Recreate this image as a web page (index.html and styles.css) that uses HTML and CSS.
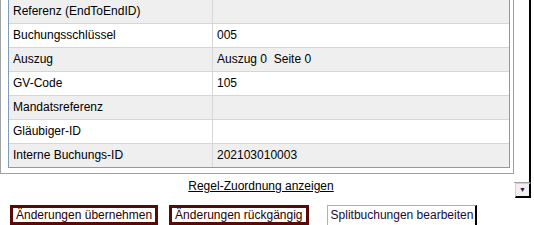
FILE: index.html
```html
<!DOCTYPE html>
<html lang="de">
<head>
  <meta charset="UTF-8" />
  <title>Buchungsdetails</title>
  <link rel="stylesheet" href="styles.css">
</head>
<body>

  <div class="main">
    <div class="left">
      <div class="panel">
        <div class="details">
          <div class="row shade"><div class="label">Referenz (EndToEndID)</div><div class="value"></div></div>
          <div class="row"><div class="label">Buchungsschlüssel</div><div class="value">005</div></div>
          <div class="row shade"><div class="label">Auszug</div><div class="value">Auszug 0&nbsp; Seite 0</div></div>
          <div class="row"><div class="label">GV-Code</div><div class="value">105</div></div>
          <div class="row shade"><div class="label">Mandatsreferenz</div><div class="value"></div></div>
          <div class="row"><div class="label">Gläubiger-ID</div><div class="value"></div></div>
          <div class="row shade"><div class="label">Interne Buchungs-ID</div><div class="value">202103010003</div></div>
        </div>
      </div>
      <div class="rule-link"><a href="#">Regel-Zuordnung anzeigen</a></div>
    </div>
    <div class="scroll">
      <div class="thumb"></div>
      <div class="arrow">▼</div>
    </div>
  </div>

  <div class="actions">
    <button class="btn btn-dark">Änderungen übernehmen</button>
    <button class="btn btn-dark">Änderungen rückgängig</button>
    <button class="btn btn-light">Splitbuchungen bearbeiten</button>
  </div>

</body>
</html>
```

FILE: styles.css
```css
body {
  margin: 0;
  background: #fff;
  font-family: "Liberation Sans", Arial, sans-serif;
  font-size: 12px;
  color: #000;
  overflow: hidden;
}
.main {
  display: flex;
  align-items: flex-start;
  margin-top: -2px;
}
.left {
  width: 514px;
}
.panel {
  border: 1px solid #a0a0a0;
  padding: 0 3px 5px 7px;
}
.details {
  border: 1px solid #7f9db9;
  background: #fff;
}
.row {
  display: grid;
  grid-template-columns: 204px 1fr;
  height: 24px;
  line-height: 23px;
  border-bottom: 1px solid #d6d6d6;
  box-sizing: border-box;
}
.row:last-child {
  height: 23px;
  border-bottom: none;
}
.row.shade { background: #efefef; }
.label {
  padding: 0 4px;
  border-right: 1px solid #d6d6d6;
  white-space: nowrap;
}
.value {
  padding: 0 4px;
  white-space: nowrap;
}
.rule-link {
  margin-top: 5px;
  padding-left: 8px;
  line-height: 15px;
  text-align: center;
}
.rule-link a {
  color: #000;
  text-decoration: underline;
}
.scroll {
  width: 17px;
  display: flex;
  flex-direction: column;
}
.thumb {
  height: 184px;
  background: #fff;
  border-right: 2px solid #000;
  border-bottom: 1px solid #a0a0a0;
}
.arrow {
  height: 12px;
  margin-left: 1px;
  background: #f0f0f0;
  border-top: 1px solid #d0d0d0;
  border-left: 1px solid #d0d0d0;
  border-right: 2px solid #000;
  border-bottom: 2px solid #000;
  color: #3a1040;
  font-size: 7px;
  line-height: 12px;
  text-align: center;
}
.actions {
  display: flex;
  align-items: flex-start;
  margin-top: 7px;
  padding-left: 10px;
}
.btn {
  font-family: inherit;
  font-size: 12px;
  line-height: 14px;
  margin: 0;
  cursor: pointer;
  white-space: nowrap;
}
.btn-dark {
  background: #fff;
  color: #2a0000;
  border: 3px solid #5a0808;
  padding: 0 3px;
  margin-right: 11px;
}
.btn-dark + .btn-dark { margin-right: 18px; }
.btn-light {
  background: #fff;
  color: #1a0a3a;
  border: 1px solid #b0b0b0;
  border-right: 2px solid #000;
  padding: 2px 2px 4px 3px;
}
```
